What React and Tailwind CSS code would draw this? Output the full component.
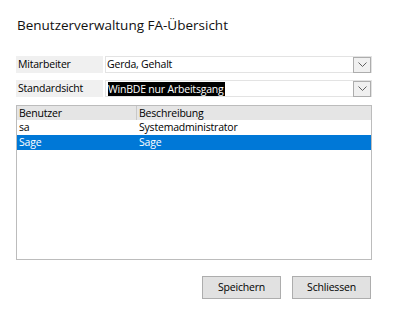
export default function App() {
  const users = [
    { name: "sa", desc: "Systemadministrator", selected: false },
    { name: "Sage", desc: "Sage", selected: true },
  ];

  const Chevron = () => (
    <div className="w-[18px] h-[16px] border border-[#adadad] bg-[#f0f0f0] flex items-center justify-center">
      <svg width="9" height="5" viewBox="0 0 9 5">
        <path d="M0.5 0.5 L4.5 4.5 L8.5 0.5" fill="none" stroke="#606060" strokeWidth="1" />
      </svg>
    </div>
  );

  return (
    <div
      className="w-[400px] h-[331px] bg-white text-black relative"
      style={{ fontFamily: '"Open Sans", "Noto Sans", sans-serif' }}
    >
      <div className="pt-[15px] pl-[17px] text-[13.5px] leading-[20px] text-[#111]">
        Benutzerverwaltung FA-Übersicht
      </div>

      <div className="mt-[21px] ml-[16px] w-[356px] flex flex-col gap-[7px] text-[10.5px] tracking-[-0.2px]">
        <div className="flex h-[17px] items-stretch gap-[2px]">
          <div className="w-[87px] bg-[#f0f0f0] pl-[2px] flex items-center">Mitarbeiter</div>
          <div className="flex-1 border border-[#e3e3e3] flex items-center justify-between">
            <span className="pl-[1px]">Gerda, Gehalt</span>
            <Chevron />
          </div>
        </div>
        <div className="flex h-[17px] items-stretch gap-[2px]">
          <div className="w-[87px] bg-[#f0f0f0] pl-[2px] flex items-center">Standardsicht</div>
          <div className="flex-1 border border-[#e3e3e3] flex items-center justify-between">
            <span className="ml-[2px] bg-black text-white leading-[14px] pr-[1px]">WinBDE nur Arbeitsgang</span>
            <Chevron />
          </div>
        </div>
      </div>

      <div className="mt-[8px] ml-[16px] w-[356px] h-[155px] border border-[#bcbcbc] text-[10.5px] tracking-[-0.2px]">
        <div className="flex h-[14px] bg-[#e5e5e5] leading-[14px]">
          <div className="w-[120px] pl-[2px] border-r border-[#c8c8c8]">Benutzer</div>
          <div className="flex-1 pl-[2px]">Beschreibung</div>
        </div>
        {users.map((u) => (
          <div
            key={u.name}
            className={
              u.selected
                ? "flex h-[15px] leading-[15px] bg-[#0078d7] text-white"
                : "flex h-[15px] leading-[15px]"
            }
          >
            <div className="w-[120px] pl-[2px]">{u.name}</div>
            <div className="flex-1 pl-[2px]">{u.desc}</div>
          </div>
        ))}
      </div>

      <div className="mt-[16px] ml-[202px] flex gap-[11px] text-[10.5px] tracking-[-0.2px]">
        <button className="w-[79px] h-[23px] bg-[#e1e1e1] border border-[#adadad] flex items-center justify-center">
          Speichern
        </button>
        <button className="w-[79px] h-[23px] bg-[#e1e1e1] border border-[#adadad] flex items-center justify-center">
          Schliessen
        </button>
      </div>
    </div>
  );
}
